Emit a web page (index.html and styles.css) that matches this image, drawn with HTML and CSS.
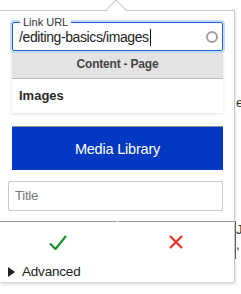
FILE: index.html
```html
<!DOCTYPE html>
<html lang="en">
<head>
    <meta charset="UTF-8">
    <meta name="viewport" content="width=device-width, initial-scale=1.0">
    <title>Link Editor</title>
    <link rel="stylesheet" href="styles.css">
</head>
<body>
    <!-- bits of the page underneath the popup -->
    <div class="page-bits">
        <span class="bit bit-e">e</span>
        <span class="bit bit-j">J</span>
        <span class="bit bit-comma">,</span>
        <span class="bit-rule"></span>
    </div>

    <div class="popup">
        <span class="arrow"></span>
        <div class="popup-body">
            <div class="url-field">
                <span class="legend">Link URL</span>
                <div class="url-value">/editing-basics/images<span class="caret"></span></div>
                <span class="spinner"></span>
            </div>

            <div class="dropdown">
                <div class="dropdown-head">Content - Page</div>
                <div class="dropdown-item">Images</div>
            </div>

            <button class="media-btn">Media Library</button>

            <div class="title-field">Title</div>
        </div>

        <div class="actions">
            <button class="action">
                <svg width="18" height="16" viewBox="0 0 18 16">
                    <path d="M1 9.5 L6.5 15 L17 2" fill="none" stroke="#15952b" stroke-width="2.2"/>
                </svg>
            </button>
            <button class="action">
                <svg width="14" height="14" viewBox="0 0 14 14">
                    <path d="M1 1 L13 13 M13 1 L1 13" fill="none" stroke="#e8321f" stroke-width="2.2"/>
                </svg>
            </button>
        </div>

        <div class="advanced">
            <span class="tri"></span>
            Advanced
        </div>
    </div>
</body>
</html>
```

FILE: styles.css
```css
body {
    margin: 0;
    font-family: "Liberation Sans", Arial, sans-serif;
    color: #222;
    background: #fff;
    width: 241px;
    height: 294px;
    overflow: hidden;
    position: relative;
}
.page-bits {
    position: absolute;
    left: 236px;
    top: 0;
    width: 5px;
    height: 294px;
    font-size: 13px;
    line-height: 14px;
    color: #333;
}
.bit {
    position: absolute;
    left: 0;
}
.bit-e { top: 96px; }
.bit-j { top: 223px; }
.bit-comma { top: 238px; }
.bit-rule {
    position: absolute;
    left: -1px;
    top: 221px;
    width: 1px;
    height: 38px;
    background: #666;
}
.popup {
    position: relative;
    margin-top: 10px;
    width: 234px;
    border-top: 1px solid #c8c8c8;
    border-right: 1px solid #c8c8c8;
    background: #fff;
    box-shadow: 0 2px 3px rgba(0, 0, 0, 0.18);
}
.arrow {
    position: absolute;
    top: -9px;
    left: 109px;
    width: 14px;
    height: 14px;
    background: #fff;
    border-top: 1px solid #c8c8c8;
    border-left: 1px solid #c8c8c8;
    transform: rotate(45deg) scaleY(0.9);
}
.popup-body {
    padding: 11px 11px 10px 8px;
}
.url-field {
    position: relative;
    margin-left: 4px;
    height: 27px;
    border: 1px solid #1e63d6;
    border-radius: 2px;
    box-shadow: 0 0 0 2px #c4dbf7;
}
.legend {
    position: absolute;
    top: -7px;
    left: 7px;
    padding: 0 3px;
    background: #fff;
    font-size: 11px;
    line-height: 12px;
    color: #333;
}
.url-value {
    padding: 5px 0 0 6px;
    font-size: 14px;
    letter-spacing: -0.4px;
    line-height: 18px;
    color: #222;
}
.caret {
    display: inline-block;
    width: 1px;
    height: 17px;
    margin-left: 1px;
    background: #111;
    vertical-align: -4px;
}
.spinner {
    position: absolute;
    right: 4px;
    top: 8px;
    width: 8px;
    height: 8px;
    border: 2px solid #a0a0a0;
    border-radius: 50%;
}
.dropdown {
    margin-left: 4px;
    box-shadow: 0 1px 3px rgba(0, 0, 0, 0.12);
}
.dropdown-head {
    height: 27px;
    line-height: 27px;
    background: #e3e3e3;
    border-bottom: 1px solid #b8b8b8;
    text-align: center;
    font-size: 12px;
    letter-spacing: -0.2px;
    font-weight: bold;
    color: #454545;
}
.dropdown-item {
    height: 34px;
    line-height: 34px;
    padding-left: 7px;
    font-size: 13px;
    font-weight: bold;
    color: #2a2a2a;
}
.media-btn {
    display: block;
    margin: 13px 0 0 4px;
    width: 211px;
    height: 44px;
    border: none;
    border-top: 1px solid #8a8f9c;
    background: #0038c1;
    color: #fff;
    font-family: inherit;
    font-size: 14.5px;
    letter-spacing: -0.2px;
}
.title-field {
    margin-top: 11px;
    height: 28px;
    line-height: 28px;
    padding-left: 6px;
    border: 1px solid #c8c8c8;
    border-radius: 2px;
    font-size: 13px;
    letter-spacing: -0.2px;
    color: #777;
}
.actions {
    display: flex;
}
.action {
    flex: 1;
    height: 40px;
    border: none;
    border-top: 1px solid #9c9c9c;
    background: #fff;
    display: flex;
    align-items: center;
    justify-content: center;
    padding: 0;
}
.action + .action {
    margin-left: 1px;
}
.advanced {
    display: flex;
    align-items: center;
    height: 21px;
    padding-left: 8px;
    font-size: 13.5px;
    letter-spacing: -0.2px;
    color: #222;
}
.tri {
    width: 0;
    height: 0;
    border-top: 5px solid transparent;
    border-bottom: 5px solid transparent;
    border-left: 7px solid #222;
    margin-right: 7px;
}
```
